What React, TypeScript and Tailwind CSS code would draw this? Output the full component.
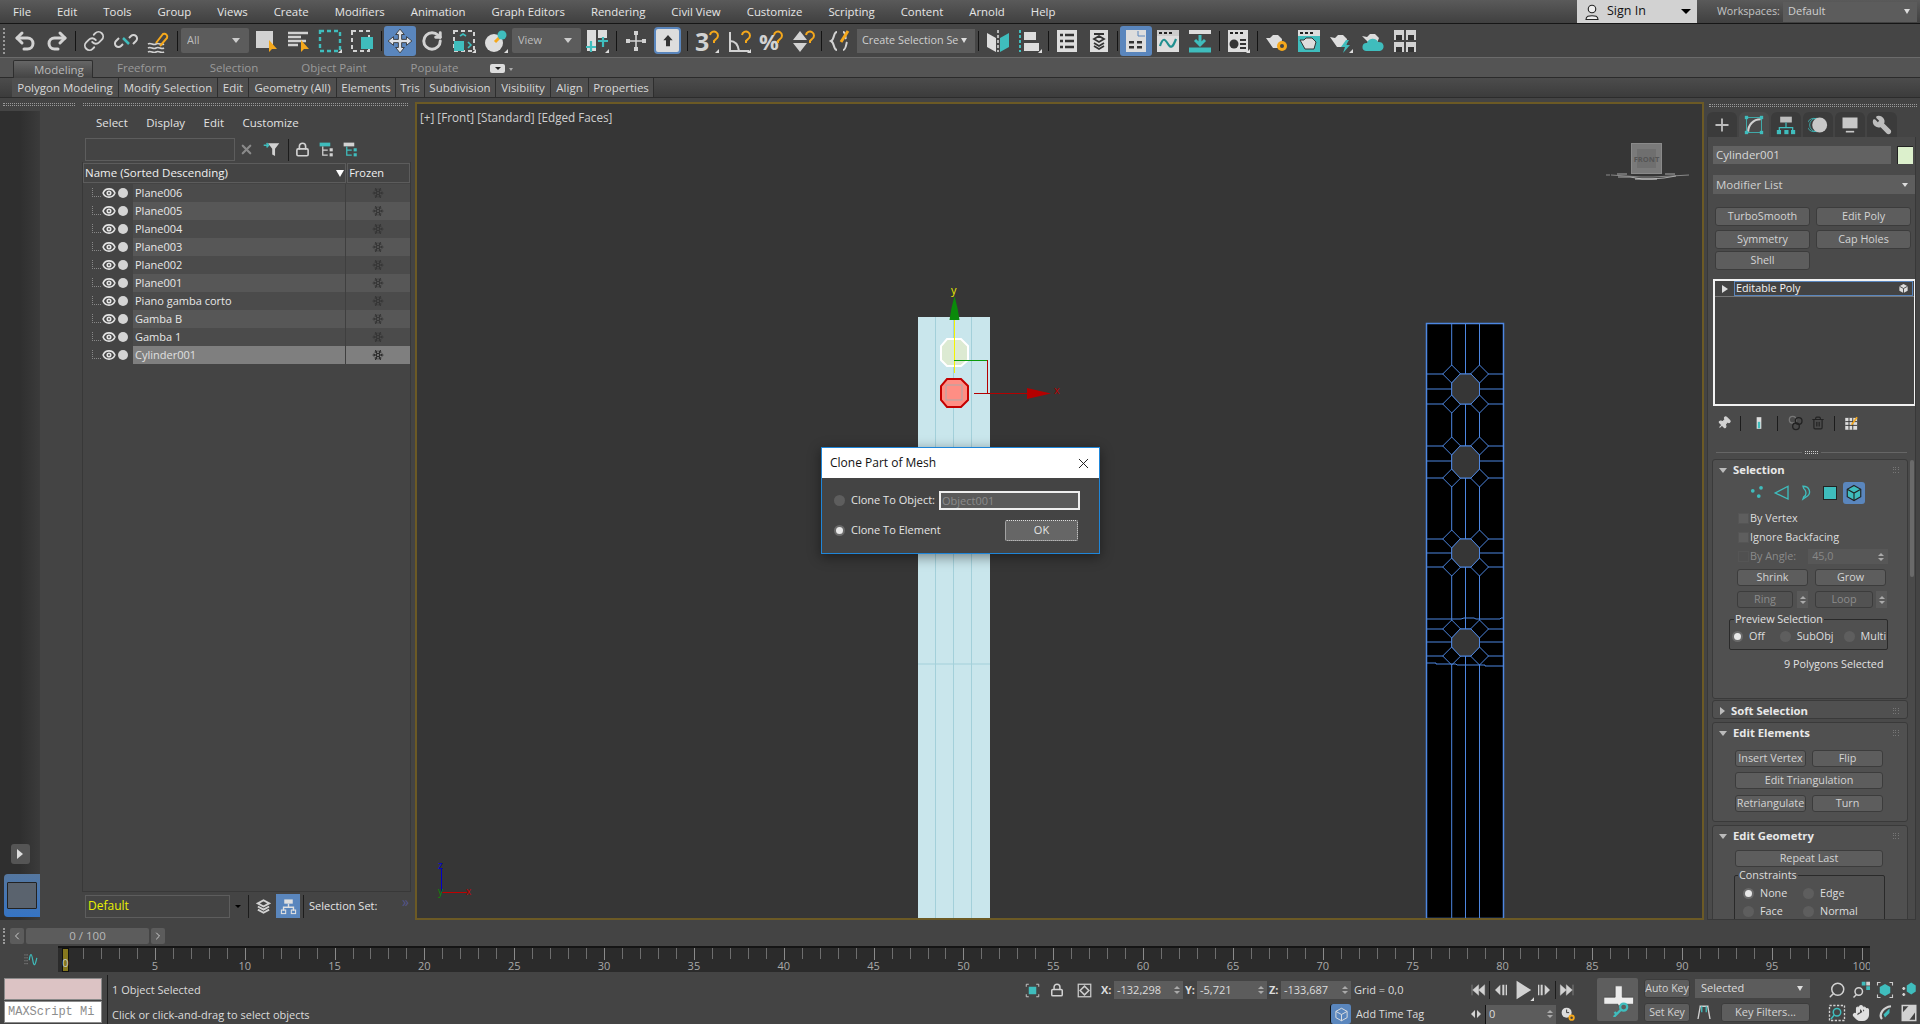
import React from 'react';
import { Undo2, Redo2, Link, RotateCw, Eye, Snowflake, Lock, X, Search, Hand, Pin, Trash2, Wrench, Plus, ChevronLeft, ChevronRight } from 'lucide-react';

const G = '#d2d2d2';
const T = '#3fbdbd';
const O = '#f5a81c';

const Ic = ({ children, s = 'w-6 h-6' }: { children: React.ReactNode; s?: string }) => (
  <svg viewBox="0 0 24 24" fill="none" className={s}>{children}</svg>
);
const Slot = ({ children, c = '' }: { children: React.ReactNode; c?: string }) => (
  <div className={`w-[32px] h-[30px] flex items-center justify-center shrink-0 ${c}`}>{children}</div>
);
const Sep = ({ w }: { w: string }) => (
  <div className={`${w} shrink-0 flex justify-center`}><div className="w-px h-[20px] bg-[#141414]" /></div>
);
const Fly = () => <path d="M24 20v4h-4z" fill="#ddd" />;
const Cursor = () => <path d="M15 11v12l3-3 2 0 3 0z" fill={O} />;
const Hook = () => <path d="M15 6a4 4 0 1 1 6 4l-2 2v2" stroke={O} strokeWidth="2" fill="none" />;
const Dropdown = ({ t, c, tc = 'text-[#bdbdbd]' }: { t: string; c: string; tc?: string }) => (
  <div className={`${c} h-[25px] bg-[#5c5c5c] rounded-[2px] flex items-center justify-between pl-[6px] pr-[9px] shrink-0 ${tc}`}>
    <span className="truncate">{t}</span>
    <span className="w-0 h-0 border-l-[4px] border-r-[4px] border-t-[5px] border-l-transparent border-r-transparent border-t-[#ccc] shrink-0" />
  </div>
);
const Grip = ({ c }: { c: string }) => <div className={`${c} h-[3px] border-y border-dotted border-[#9a9a9a]`} />;

const Menu = () => (
  <div className="h-[24px] shrink-0 flex items-center pl-[13px] gap-[26px] bg-gradient-to-b from-[#5a5a5a] to-[#404040] border-b border-[#161616] text-[#e6e6e6] text-[11.4px] relative">
    {['File', 'Edit', 'Tools', 'Group', 'Views', 'Create', 'Modifiers', 'Animation', 'Graph Editors', 'Rendering', 'Civil View', 'Customize', 'Scripting', 'Content', 'Arnold', 'Help'].map((m) => (
      <span key={m}>{m}</span>
    ))}
    <div className="ml-auto flex items-center h-full">
      <div className="w-[120px] h-[23px] bg-[#d2d2d2] flex items-center pl-[6px] pr-[4px] text-[#111] text-[12.5px]">
        <Ic s="w-[18px] h-[18px]"><circle cx="12" cy="8" r="5" stroke="#222" strokeWidth="1.5" fill="#eee" /><path d="M4 22c0-5 4-5 8-5s8 0 8 5z" stroke="#222" strokeWidth="1.5" fill="#eee" /></Ic>
        <span className="ml-[6px]">Sign In</span>
        <span className="ml-auto mr-[2px] w-0 h-0 border-l-[5px] border-r-[5px] border-t-[5px] border-l-transparent border-r-transparent border-t-black" />
      </div>
      <span className="ml-[20px] w-[61px] text-[#c4c4c4] text-[10.7px] whitespace-nowrap">Workspaces:</span>
      <div className="ml-[5px] mr-[3px] w-[134px] h-[20px] bg-[#5c5c5c] flex items-center justify-between pl-[5px] pr-[7px] text-[#cfcfcf] text-[11px]">
        <span>Default</span>
        <span className="w-0 h-0 border-l-[3px] border-r-[3px] border-t-[5px] border-l-transparent border-r-transparent border-t-[#ddd]" />
      </div>
    </div>
  </div>
);

const Toolbar = () => (
  <div className="h-[33px] shrink-0 flex items-center pl-[3px] bg-[#454545]">
    <div className="w-[6px] h-[26px] border-l-2 border-dotted border-[#999] shrink-0" />
    <Slot><Undo2 className="w-[24px] h-[24px]" color={G} strokeWidth={3} /></Slot>
    <Slot><Redo2 className="w-[24px] h-[24px]" color={G} strokeWidth={3} /></Slot>
    <Sep w="w-[5px]" />
    <Slot><Link className="w-[22px] h-[22px]" color={G} strokeWidth={2} /></Slot>
    <Slot><Ic><path d="M9 15l-2 2a3.5 3.5 0 0 1-5-5l3-3M15 9l2-2a3.5 3.5 0 0 1 5 5l-3 3" stroke={G} strokeWidth="2" /><path d="M9 9l6 6" stroke={T} strokeWidth="2.5" /></Ic></Slot>
    <Slot><Ic><path d="M2 15c3-2 5 2 8 0s5 2 8 0M2 19c3-2 5 2 8 0s5 2 8 0M2 23c3-2 5 2 8 0s5 2 8 0" stroke={G} strokeWidth="1.6" /><path d="M10 14l7-9a3 3 0 0 1 4 4l-7 8" stroke={O} strokeWidth="2" /></Ic></Slot>
    <Sep w="w-[7px]" />
    <Dropdown t="All" c="w-[68px] text-[11px]" />
    <div className="w-px" />
    <Slot><Ic><rect x="2" y="2" width="17" height="17" fill={G} /><Cursor /></Ic></Slot>
    <Slot><Ic><path d="M2 4h20M2 8h13M2 12h18M2 16h10" stroke={G} strokeWidth="2.4" /><Cursor /></Ic></Slot>
    <Slot><Ic><rect x="2" y="2" width="20" height="20" stroke={T} strokeWidth="2.4" strokeDasharray="4 3" /><Fly /></Ic></Slot>
    <Slot><Ic><rect x="2" y="2" width="17" height="20" stroke={G} strokeWidth="2" strokeDasharray="4 3" /><rect x="11" y="8" width="12" height="12" fill={T} /></Ic></Slot>
    <Sep w="w-[6px]" />
    <Slot c="bg-[#5a86bd] rounded-[3px]"><Ic s="w-[26px] h-[26px]"><path d="M12 1l4 5h-2.5v4.5H18V8l5 4-5 4v-2.500h-4.500V18H16l-4 5-4-5h2.500v-4.500H6V16l-5-4 5-4v2.500h4.500V6H8z" fill="#dfe3e8" stroke="#333" strokeWidth=".8" /></Ic></Slot>
    <Slot><RotateCw className="w-[22px] h-[22px]" color={G} strokeWidth={3.2} /></Slot>
    <Slot><Ic><rect x="2" y="2" width="20" height="20" stroke={G} strokeWidth="2" strokeDasharray="4 3" /><rect x="2" y="12" width="10" height="10" fill={T} /><path d="M8 7l3-2 3 2M16 13l3 3-3 3" stroke={T} strokeWidth="1.6" /><Fly /></Ic></Slot>
    <Slot><Ic><circle cx="10" cy="14" r="9" fill="#ddd" /><path d="M11 13l6-6" stroke={O} strokeWidth="3" /><circle cx="18" cy="6" r="4.500" fill={T} /><Fly /></Ic></Slot>
    <Dropdown t="View" c="w-[69px] text-[11px]" />
    <Slot><Ic><rect x="2" y="1" width="9" height="21" fill="#ddd" /><rect x="13" y="1" width="9" height="8" fill="#ddd" /><path d="M6 12v11M1 18h10M18 8v10M13 12h10" stroke={T} strokeWidth="2.2" /><Fly /></Ic></Slot>
    <Sep w="w-[7px]" />
    <Slot><Ic><path d="M12 3v18M3 12h18" stroke={G} strokeWidth="1.6" /><rect x="10" y="2" width="4" height="4" fill={G} /><rect x="2" y="10" width="4" height="4" fill={G} /><rect x="18" y="10" width="4" height="4" fill={G} /><rect x="10" y="18" width="4" height="4" fill={G} /></Ic></Slot>
    <Slot c="pr-px"><div className="w-[27px] h-[27px] rounded-[4px] border-2 border-[#5a86bd] bg-[#ddd] flex items-center justify-center"><Ic s="w-4 h-4"><path d="M12 3l7 8h-4v9H9v-9H5z" fill="#333" /></Ic></div></Slot>
    <Sep w="w-[7px]" />
    <Slot><span className="relative w-[24px] h-[24px] block"><span className="absolute left-0 -top-[2px] text-[25px] leading-[28px] font-bold text-[#d2d2d2]">3</span><Ic s="absolute inset-0 w-6 h-6"><Hook /><Fly /></Ic></span></Slot>
    <Slot><Ic><path d="M3 3v19h19M3 12c5 0 8 3 9 10" stroke={G} strokeWidth="2" /><Hook /><Fly /></Ic></Slot>
    <Slot><span className="relative w-[24px] h-[24px] block"><span className="absolute left-0 -top-[1px] text-[22px] leading-[26px] font-bold text-[#d2d2d2]">%</span><Ic s="absolute inset-0 w-6 h-6"><Hook /></Ic></span></Slot>
    <Slot><Ic><path d="M9 2l7 9H2zM9 23l7-9H2z" fill={G} /><Hook /></Ic></Slot>
    <Sep w="w-[5px]" />
    <Slot><Ic><path d="M9 3C5 3 7 10 3 12c4 2 2 9 6 9" stroke={G} strokeWidth="2" /><path d="M15 3c3 0 2 5 3 7M15 21c3 0 3-6 4-8" stroke={G} strokeWidth="2" /><path d="M13 13l7-11" stroke={O} strokeWidth="3" /></Ic></Slot>
    <div className="ml-px w-[118px] h-[24px] bg-[#5c5c5c] flex items-center pl-[5px] pr-[8px] text-[#d0d0d0] text-[10.8px] shrink-0 gap-[3px]">
      <span className="whitespace-nowrap">Create Selection Se</span>
      <span className="ml-auto w-0 h-0 border-l-[3px] border-r-[3px] border-t-[5px] border-l-transparent border-r-transparent border-t-[#ddd] shrink-0" />
    </div>
    <Sep w="w-[7px]" />
    <Slot><Ic><path d="M1 4l9 5v14l-9-5z" fill="#ddd" /><path d="M12 1v22" stroke="#ddd" strokeWidth="1.500" strokeDasharray="3 2" /><path d="M23 4l-9 5v14l9-5z" fill={T} /></Ic></Slot>
    <Slot><Ic><path d="M2 1v22" stroke={T} strokeWidth="2" strokeDasharray="3 2" /><rect x="6" y="3" width="12" height="8" fill="#ddd" /><rect x="6" y="14" width="15" height="8" fill="#ddd" /><Fly /></Ic></Slot>
    <Sep w="w-[5px]" />
    <Slot><Ic><rect x="2" y="1" width="20" height="22" fill="#ddd" /><path d="M5 6h3M10 6h9M5 12h3M10 12h9M5 18h3M10 18h9" stroke="#333" strokeWidth="2.500" /></Ic></Slot>
    <Slot><Ic><rect x="3" y="1" width="18" height="22" fill="#ddd" /><path d="M7 5h10M7 10l5-3 5 3-5 3zM7 14l5 3 5-3M7 17l5 3 5-3" stroke="#333" strokeWidth="1.800" /></Ic></Slot>
    <Sep w="w-[5px]" />
    <Slot c="bg-[#5a86bd] rounded-[3px]"><Ic><rect x="2" y="1" width="20" height="22" fill="#ddd" /><path d="M14 2v5h7" stroke="#5a86bd" strokeWidth="1" /><rect x="5" y="12" width="5" height="2.500" fill="#333" /><rect x="13" y="12" width="5" height="2.500" fill="#333" /><rect x="5" y="17" width="5" height="2.500" fill="#333" /><rect x="13" y="17" width="5" height="2.500" fill="#333" /></Ic></Slot>
    <Slot><Ic><rect x="1" y="1" width="22" height="22" fill="#ddd" /><rect x="1" y="1" width="22" height="6" fill="#ccc" /><path d="M3 4h3M8 4h3M13 4h3" stroke="#222" strokeWidth="2" /><path d="M4 17c3-9 5-7 8-2s5 3 8-5" stroke="#1f8f8f" strokeWidth="2.200" /></Ic></Slot>
    <Slot><Ic><path d="M1 3h22" stroke="#ddd" strokeWidth="4" /><path d="M12 6v9M7 11l5 5 5-5" stroke={T} strokeWidth="3" /><path d="M1 21h22" stroke={T} strokeWidth="5" /></Ic></Slot>
    <Sep w="w-[6px]" />
    <Slot><Ic><rect x="2" y="1" width="20" height="22" fill="#ddd" /><path d="M4 4h3M9 4h3M14 4h3" stroke="#222" strokeWidth="2" /><circle cx="8" cy="15" r="4.500" fill="#333" /><path d="M14 11h6M14 15h6M14 19h6" stroke="#333" strokeWidth="2" /><Fly /></Ic></Slot>
    <Sep w="w-[7px]" />
    <Slot><Ic><path d="M1 9l4 0 3-3h5l4 4-1 9H8z" fill="#ddd" /><circle cx="17" cy="17" r="5" fill={O} /><circle cx="17" cy="17" r="2" fill="#444" /></Ic></Slot>
    <Slot><Ic><rect x="1" y="1" width="22" height="22" fill={T} /><rect x="1" y="1" width="22" height="6" fill="#ddd" /><path d="M3 4h3M8 4h3M13 4h3" stroke="#222" strokeWidth="2" /><path d="M3 11h4l2-2h6l4 4-2 7H8z" fill="#ddd" stroke="#333" /></Ic></Slot>
    <Slot><Ic><path d="M1 8l5 1 3-3h5l4 4-1 8H8z" fill="#ddd" /><path d="M17 11l-5 7h4l-2 6 7-8h-4l3-5z" fill={T} /><Fly /></Ic></Slot>
    <Slot><Ic><path d="M1 7l5 1 3-3h5l4 4-2 5H8z" fill="#ddd" /><path d="M5 22a4 4 0 0 1 1-8 6 6 0 0 1 11-1 4.500 4.500 0 0 1 2 9z" fill={T} /></Ic></Slot>
    <Slot><div className="grid grid-cols-2 gap-[2px]">{[0, 1, 2, 3].map((i) => <div key={i} className="w-[10px] h-[10px] bg-[#d2d2d2] flex items-end justify-center"><div className="w-[6px] h-[5px] bg-[#333]" /></div>)}</div></Slot>
  </div>
);

const Tabs = () => (
  <div className="h-[21px] shrink-0 bg-[#545454] border-t border-[#6b6b6b] border-b-[#2b2b2b] border-b flex items-end pl-[13px] text-[#9a9a9a] relative">
    <div className="w-[80px] h-[18px] -mb-px bg-gradient-to-b from-[#666] to-[#444] border border-[#2e2e2e] border-b-0 rounded-t-[2px] pl-[20px] leading-[17px] text-[#b9b9b9]">Modeling</div>
    <span className="ml-[24px] mb-px">Freeform</span>
    <span className="ml-[43px] mb-px">Selection</span>
    <span className="ml-[43px] mb-px">Object Paint</span>
    <span className="ml-[44px] mb-px">Populate</span>
    <div className="ml-[32px] mb-[4px] w-[15px] h-[9px] bg-[#ddd] rounded-[2px] flex items-center justify-center"><span className="w-0 h-0 border-l-[3px] border-r-[3px] border-t-[3px] border-l-transparent border-r-transparent border-t-[#222]" /></div>
    <span className="ml-[4px] mb-[6px] w-0 h-0 border-l-[2px] border-r-[2px] border-t-[3px] border-l-transparent border-r-transparent border-t-[#aaa]" />
  </div>
);

const ribbon = [
  { t: 'Polygon Modeling', c: 'w-[107px]' }, { t: 'Modify Selection', c: 'w-[99px]' }, { t: 'Edit', c: 'w-[31px]' },
  { t: 'Geometry (All)', c: 'w-[88px]' }, { t: 'Elements', c: 'w-[59px]' }, { t: 'Tris', c: 'w-[29px]' },
  { t: 'Subdivision', c: 'w-[71px]' }, { t: 'Visibility', c: 'w-[55px]' }, { t: 'Align', c: 'w-[38px]' }, { t: 'Properties', c: 'w-[65px]' },
];
const Ribbon = () => (
  <div className="h-[20px] shrink-0 bg-gradient-to-b from-[#4c4c4c] to-[#3c3c3c] border-b border-[#2c2c2c] flex pl-[12px] text-[#d8d8d8]">
    {ribbon.map((r) => (
      <div key={r.t} className={`${r.c} h-[19px] bg-[#4f4f4f] border-r border-[#2e2e2e] flex items-center justify-center shrink-0 whitespace-nowrap`}>{r.t}</div>
    ))}
  </div>
);

const objs = ['Plane006', 'Plane005', 'Plane004', 'Plane003', 'Plane002', 'Plane001', 'Piano gamba corto', 'Gamba B', 'Gamba 1', 'Cylinder001'];

const LeftDock = () => (
  <div className="w-[82px] shrink-0 flex flex-col">
    <div className="h-[13px] flex items-center pl-[3px] shrink-0"><Grip c="w-[72px]" /></div>
    <div className="w-[40px] flex-1 bg-gradient-to-r from-[#2f2f2f] via-[#2f2f2f] to-[#3b3b3b] flex flex-col items-center justify-end pb-[3px]">
      <div className="w-[19px] h-[20px] bg-[#555] rounded-[3px] flex items-center justify-center mb-[10px]"><span className="w-0 h-0 border-t-[5px] border-b-[5px] border-l-[6px] border-t-transparent border-b-transparent border-l-[#ddd]" /></div>
      <div className="w-[36px] h-[43px] ml-[4px] bg-gradient-to-b from-[#55779f] to-[#3574c4] rounded-l-[4px] flex items-start pl-[3px] pt-[8px]">
        <div className="w-[30px] h-[27px] bg-[#5a636e] border border-[#222] rounded-[1px]" />
      </div>
    </div>
  </div>
);

const Explorer = () => (
  <div className="w-[330px] shrink-0 flex flex-col">
    <div className="h-[13px] flex items-center pl-px shrink-0"><Grip c="w-[325px]" /></div>
    <div className="h-[26px] shrink-0 flex items-center gap-[18.5px] pl-[14px] pb-[2px] text-[11.5px] text-[#e2e2e2]">
      <span>Select</span><span>Display</span><span>Edit</span><span>Customize</span>
    </div>
    <div className="h-[25px] shrink-0 flex items-center pl-[3px]">
      <div className="w-[150px] h-[23px] border border-[#5d5d5d] bg-[#444]" />
      <X className="ml-[4px] w-[15px] h-[15px]" color="#8a8a8a" strokeWidth={3.5} />
      <Ic s="ml-[9px] w-[17px] h-[17px]"><path d="M7 3h16l-6 8v10l-4-2v-8z" fill={G} /><path d="M1 6h7M5 3l3 3-3 3" stroke={T} strokeWidth="2" /></Ic>
      <div className="ml-[8px] w-px h-[22px] bg-[#1c1c1c]" />
      <Lock className="ml-[6px] w-[15px] h-[15px]" color={G} strokeWidth={2.6} />
      <Ic s="ml-[9px] w-[15px] h-[15px]"><rect x="1" y="1" width="17" height="6" fill={T} /><path d="M6 7v14h8M6 13h8" stroke={G} strokeWidth="2" /><rect x="17" y="10" width="5" height="5" fill={G} /><rect x="17" y="18" width="5" height="5" fill={G} /></Ic>
      <Ic s="ml-[9px] w-[15px] h-[15px]"><rect x="1" y="1" width="17" height="6" fill={G} /><path d="M6 7v14h8M6 13h8" stroke={T} strokeWidth="2" /><rect x="17" y="10" width="5" height="5" fill={T} /><rect x="17" y="18" width="5" height="5" fill={T} /></Ic>
    </div>
    <div className="flex-1 mr-[1px] border border-[#383838] border-t-0 flex flex-col text-[#e8e8e8]">
      <div className="h-[22px] shrink-0 flex pt-px text-[#f0f0f0]">
        <div className="w-[264px] h-[20px] border border-[#5c5c5c] flex items-center justify-between pl-[1px] pr-[1px]">
          <span>Name (Sorted Descending)</span>
          <span className="w-0 h-0 border-l-[4px] border-r-[4px] border-t-[7px] border-l-transparent border-r-transparent border-t-white" />
        </div>
        <div className="ml-px w-[63px] h-[20px] border border-[#5c5c5c] flex items-center pl-px text-[11px]">Frozen</div>
      </div>
      {objs.map((o, i) => {
        const sel = i === 9;
        const bg = sel ? 'bg-[#7f7f7f]' : i % 2 ? 'bg-[#575757]' : 'bg-[#4b4b4b]';
        return (
          <div key={o} className="h-[18px] shrink-0 flex items-center">
            <div className="w-[50px] h-full flex items-center shrink-0">
              <div className="ml-[9px] w-[9px] h-[9px] border-b border-l border-dotted border-[#888] -mt-[2px]" />
              <Eye className="ml-[1px] w-[14px] h-[14px]" color="#e4e4e4" strokeWidth={2.8} />
              <div className="ml-[2px] w-[10px] h-[10px] rounded-full bg-[#d4d4d4]" />
            </div>
            <div className={`w-[213px] h-full ${bg} flex items-center pl-[2px] border-r border-[#3f3f3f] text-[11px] ${sel ? 'text-[#e0e0e0]' : ''}`}>{o}</div>
            <div className={`w-[64px] h-full ${bg} flex items-center justify-center`}><Snowflake className="w-[12px] h-[12px]" color={sel ? '#2a2a2a' : '#363636'} strokeWidth={2.2} /></div>
          </div>
        );
      })}
    </div>
    <div className="h-[28px] shrink-0 flex items-center pl-[3px] text-[#e6e6e6]">
      <div className="w-[145px] h-[23px] border border-[#5d5d5d] pl-[2px] text-[#e9f000] text-[12px] leading-[20px]">Default</div>
      <span className="ml-[5px] w-0 h-0 border-l-[3px] border-r-[3px] border-t-[3px] border-l-transparent border-r-transparent border-t-black" />
      <div className="ml-[7px] w-px h-[23px] bg-[#1c1c1c]" />
      <Ic s="ml-[7px] w-[15px] h-[15px]"><path d="M3 7l9-5 9 5-9 5zM3 12l9 5 9-5M3 17l9 5 9-5" stroke={G} strokeWidth="3" /></Ic>
      <div className="ml-[5px] w-[24px] h-[24px] bg-[#5a86bd] flex items-center justify-center">
        <Ic s="w-[17px] h-[17px]"><rect x="6" y="2" width="12" height="6" fill="#e0e0e0" /><path d="M12 8v5M5 18v-5h14v5" stroke="#e0e0e0" strokeWidth="2" /><rect x="2" y="17" width="6" height="5" stroke="#e0e0e0" strokeWidth="1.500" /><rect x="16" y="17" width="6" height="5" stroke="#e0e0e0" strokeWidth="1.500" /></Ic>
      </div>
      <div className="ml-[3px] w-px h-[23px] bg-[#1c1c1c]" />
      <span className="ml-[5px] text-[11px] whitespace-nowrap">Selection Set:</span>
      <span className="ml-auto mr-[3px] -mt-[8px] text-[#54558a] text-[14px] leading-none">»</span>
    </div>
  </div>
);

const Scene = () => {
  const verts = [1451.7, 1465.5, 1479.5];
  const octs = [
    { t: 374, m: 389, b: 404 }, { t: 446, m: 461, b: 478 }, { t: 539, m: 553, b: 567 }, { t: 629, m: 642, b: 656 },
  ];
  const blue = '#4d86e0';
  return (
    <svg viewBox="417 104 1285 814" className="absolute inset-0 w-full h-full">
      <rect x="918" y="317" width="72" height="601" fill="#c9e6ec" />
      <path d="M935.500 317V918M953.500 317V918M971.500 317V918M918 664H990" stroke="#a3d0da" strokeWidth="1" />
      <polygon points="947,339 961,339 968,346 968,360 961,366 947,366 941,360 941,346" fill="#dcead2" stroke="#fff" strokeWidth="2" />
      <polygon points="947,379 961,379 968,386 968,400 961,407 947,407 941,400 941,386" fill="#ff8e84" stroke="#c40000" strokeWidth="2" />
      <rect x="946" y="385" width="16" height="15" fill="none" stroke="#a9a9a9" />
      <path d="M954.500 320V373" stroke="#f4f400" strokeWidth="1" />
      <path d="M954 360.500H987.500" stroke="#0a9a0a" strokeWidth="1" />
      <path d="M987.500 360V393.500M974 393.500H1030" stroke="#b40000" strokeWidth="1" />
      <path d="M954.500 296l3 12 2 12h-10l2-12z" fill="#0a8a0a" />
      <path d="M1027 388l24 5.500-24 5.500z" fill="#b40000" />
      <text x="951" y="294" fill="#e8e800" fontSize="11">y</text>
      <text x="1054" y="394" fill="#b40000" fontSize="11">x</text>
      <rect x="1426.500" y="323.500" width="77" height="595" fill="#000" stroke={blue} strokeWidth="1.500" />
      {verts.map((v) => <path key={v} d={`M${v} 323V918`} stroke={blue} strokeWidth="1" />)}
      {octs.map((o) => (
        <g key={o.t}>
          <path d={`M1426 ${o.t}H1504M1426 ${o.m}H1504M1426 ${o.b}H1504`} stroke={blue} strokeWidth="1" />
          {[[1451.7, o.t], [1479.5, o.t], [1451.7, o.b], [1479.5, o.b]].map(([x, y]) => (
            <polygon key={`${x}-${y}`} points={`${x - 9},${y} ${x},${y - 9} ${x + 9},${y} ${x},${y + 9}`} fill="#000" stroke={blue} strokeWidth="1" />
          ))}
          <polygon points={`1460,${o.t} 1471,${o.t} 1479.500,${o.t + 9} 1479.500,${o.b - 9} 1471,${o.b} 1460,${o.b} 1451.700,${o.b - 9} 1451.700,${o.t + 9}`} fill="#363636" stroke={blue} strokeWidth="1" />
        </g>
      ))}
      <path d="M1426 619H1461l3-1h10l2 1h24l1-1h3M1426 663H1436v1h20l1 1h28v1h18" fill="none" stroke={blue} strokeWidth="1" />
      <rect x="1631.500" y="143.500" width="30" height="30" fill="#7a7a7a" stroke="#8a8a8a" />
      <rect x="1637" y="149" width="19" height="19" fill="#6f6f6f" />
      <text x="1646.500" y="162" fill="#555" fontSize="7.500" fontWeight="700" textAnchor="middle">FRONT</text>
      <path d="M1606 175h4M1611 175l30 2h12l36-2" stroke="#888" fill="none" />
      <path d="M1618 177l12 0 12 2h10l12 -1 12-2M1617 174h10M1665 174h10" stroke="#aaa" fill="none" />
      <path d="M1635 179h22" stroke="#ccc" />
      <path d="M441.500 868V892.500H467" fill="none" stroke="#0000c8" />
      <path d="M441.500 892.500H467" stroke="#c00000" />
      <text x="438" y="869" fill="#0000d0" fontSize="10">z</text>
      <text x="438" y="895" fill="#0a8a0a" fontSize="10">y</text>
      <text x="466" y="895" fill="#c00000" fontSize="10">x</text>
    </svg>
  );
};

const Radio = ({ on, c = '' }: { on?: boolean; c?: string }) => (
  <span className={`w-[11px] h-[11px] rounded-full flex items-center justify-center shrink-0 ${on ? 'bg-[#6a6a6a]' : 'bg-[#5e5e5e]'} ${c}`}>
    {on && <span className="w-[7px] h-[7px] rounded-full bg-[#e8e8e8]" />}
  </span>
);

const Dialog = () => (
  <div className="absolute left-[404px] top-[343px] w-[279px] h-[107px] border border-[#1f86d9] bg-[#444] shadow-[0_3px_12px_rgba(0,0,0,0.45)] flex flex-col z-10">
    <div className="h-[30px] bg-white flex items-center justify-between pl-[8px] pr-[7px] text-[#111] text-[12px] shrink-0">
      <span>Clone Part of Mesh</span>
      <X className="w-[17px] h-[17px]" color="#111" strokeWidth={1.3} />
    </div>
    <div className="flex-1 pl-[12px] pr-[20px] pt-[13px] text-[#e4e4e4] text-[11px]">
      <div className="flex items-center h-[19px]">
        <Radio />
        <span className="ml-[6px] w-[82px] whitespace-nowrap">Clone To Object:</span>
        <div className="ml-[6px] w-[141px] h-[19px] border-2 border-[#eee] bg-[#5a5a5a] text-[#8b8b8b] pl-px leading-[15px] shrink-0">Object001</div>
      </div>
      <div className="flex items-center h-[21px] mt-[10px]">
        <Radio on />
        <span className="ml-[6px] whitespace-nowrap">Clone To Element</span>
        <div className="ml-auto mr-px w-[73px] h-[21px] bg-[#666] border border-dotted border-[#ddd] rounded-[2px] flex items-center justify-center">OK</div>
      </div>
    </div>
  </div>
);

const Viewport = () => (
  <div className="w-[1289px] h-[818px] mt-[4px] shrink-0 border-2 border-[#6c5a25] bg-[#363636] relative overflow-hidden ml-[3px]">
    <Scene />
    <div className="absolute left-[3px] top-[5px] text-[#cfcfcf] text-[11.7px] whitespace-nowrap">[+] [Front] [Standard] [Edged Faces]</div>
    <Dialog />
  </div>
);

const PBtn = ({ t, c, dim }: { t: string; c: string; dim?: boolean }) => (
  <div className={`${c} bg-[#5d5d5d] border border-[#3c3c3c] rounded-[3px] flex items-center justify-center shrink-0 whitespace-nowrap ${dim ? 'text-[#8c8c8c] bg-[#525252]' : 'text-[#d4d4d4]'}`}>{t}</div>
);
const Head = ({ t, open = true }: { t: string; open?: boolean }) => (
  <div className="h-[20px] flex items-center pl-[6px] pr-[8px] shrink-0">
    {open ? <span className="w-0 h-0 border-l-[4px] border-r-[4px] border-t-[5px] border-l-transparent border-r-transparent border-t-[#bbb]" /> : <span className="ml-[1px] w-0 h-0 border-t-[4px] border-b-[4px] border-l-[5px] border-t-transparent border-b-transparent border-l-[#bbb]" />}
    <span className={`${open ? 'ml-[6px]' : 'ml-[6px]'} font-bold text-[11.3px] text-[#e8e8e8]`}>{t}</span>
    <span className="ml-auto w-[6px] h-[6px] grid grid-cols-3 gap-px">{[0, 1, 2, 3, 4, 5, 6, 7, 8].map((i) => <i key={i} className="bg-[#777] w-px h-px" />)}</span>
  </div>
);
const Check = ({ t, dim }: { t: string; dim?: boolean }) => (
  <div className={`flex items-center h-[19px] pl-[25px] ${dim ? 'text-[#8a8a8a]' : 'text-[#dedede]'}`}>
    <span className={`w-[11px] h-[11px] ${dim ? 'bg-[#505050]' : 'bg-[#5e5e5e]'} border border-[#555] shrink-0`} />
    <span className="ml-[1px]">{t}</span>
  </div>
);
const Spin = () => (
  <span className="flex flex-col gap-[2px] shrink-0">
    <span className="w-0 h-0 border-l-[3px] border-r-[3px] border-b-[3px] border-l-transparent border-r-transparent border-b-[#aaa]" />
    <span className="w-0 h-0 border-l-[3px] border-r-[3px] border-t-[3px] border-l-transparent border-r-transparent border-t-[#aaa]" />
  </span>
);

const RightPanel = () => (
  <div className="flex-1 min-w-0 flex flex-col pl-[3px] pr-[3px] text-[10.8px]">
    <div className="h-[14px] flex items-center pl-[2px] shrink-0"><Grip c="w-[208px]" /></div>
    <div className="h-[25px] flex gap-[2px] shrink-0">
      {[
        <Plus key="a" className="w-[20px] h-[20px]" color="#bdbdbd" strokeWidth={2.2} />,
        <Ic key="b" s="w-[20px] h-[20px]"><rect x="3" y="3" width="18" height="18" stroke={T} /><path d="M5 20c0-8 6-15 15-15" stroke={G} strokeWidth="2.500" /><rect x="1" y="1" width="4" height="4" fill={T} /><rect x="19" y="1" width="4" height="4" fill={T} /><rect x="1" y="19" width="4" height="4" fill={T} /><rect x="19" y="19" width="4" height="4" fill={T} /></Ic>,
        <Ic key="c" s="w-[20px] h-[20px]"><rect x="5" y="2" width="14" height="7" fill="#bdbdbd" /><path d="M12 9v6M4 19v-4h16v4" stroke={T} strokeWidth="1.500" /><rect x="1" y="18" width="5" height="5" fill={T} /><rect x="10" y="18" width="5" height="5" fill={T} /><rect x="18" y="18" width="5" height="5" fill={T} /></Ic>,
        <Ic key="d" s="w-[20px] h-[20px]"><circle cx="7" cy="12" r="8" stroke={T} /><circle cx="10" cy="12" r="8" stroke={T} /><circle cx="14" cy="12" r="9" fill="#c8c8c8" /></Ic>,
        <Ic key="e" s="w-[20px] h-[20px]"><rect x="3" y="3" width="18" height="13" fill="#c8c8c8" /><path d="M7 20h10" stroke="#c8c8c8" strokeWidth="2" /></Ic>,
        <Wrench key="f" className="w-[20px] h-[20px] -scale-x-100" color="#bdbdbd" fill="#bdbdbd" />,
      ].map((ic, i) => (
        <div key={i} className={`w-[30px] h-full rounded-t-[6px] flex items-center justify-center ${i === 1 ? 'bg-[#4b4b4b]' : 'bg-[#3b3b3b]'}`}>{ic}</div>
      ))}
    </div>
    <div className="flex-1 min-h-0 bg-[#4a4a4a] border border-[#383838] border-t-0 mr-px flex flex-col overflow-hidden">
      <div className="flex pl-[5px] pt-[9px] shrink-0">
        <div className="w-[178px] h-[18px] bg-[#626262] pl-[3px] text-[#d8d8d8] leading-[18px] text-[11.5px]">Cylinder001</div>
        <div className="ml-[6px] w-[16px] h-[18px] bg-[#dcf0cc] border-l border-t border-[#222]" />
      </div>
      <div className="ml-[5px] mt-[11px] w-[202px] h-[19px] bg-[#5e5e5e] flex items-center justify-between pl-[3px] pr-[7px] text-[#d0d0d0] shrink-0 text-[11.5px]">
        <span>Modifier List</span>
        <span className="w-0 h-0 border-l-[3px] border-r-[3px] border-t-[4px] border-l-transparent border-r-transparent border-t-[#ddd]" />
      </div>
      <div className="ml-[7px] mt-[13px] grid grid-cols-[95px_95px] gap-x-[6px] gap-y-[4px] shrink-0">
        <PBtn t="TurboSmooth" c="h-[19px]" /><PBtn t="Edit Poly" c="h-[19px]" />
        <PBtn t="Symmetry" c="h-[19px]" /><PBtn t="Cap Holes" c="h-[19px]" />
        <PBtn t="Shell" c="h-[19px] -mt-[2px]" />
      </div>
      <div className="ml-[5px] mt-[9px] w-[203px] h-[127px] border-2 border-[#f2f2f2] bg-[#434343] shrink-0">
        <div className="h-[16px] flex border-b border-[#777]">
          <div className="w-[19px] flex items-center pl-[7px]"><span className="w-0 h-0 border-t-[4px] border-b-[4px] border-l-[6px] border-t-transparent border-b-transparent border-l-[#ddd]" /></div>
          <div className="flex-1 border border-[#5a86bd] flex items-center justify-between pl-px pr-[3px] text-[#f4f4f4] mr-px">
            <span>Editable Poly</span>
            <Ic s="w-[11px] h-[11px]"><path d="M12 2l9 5v10l-9 5-9-5V7z" fill="#ddd" /><path d="M3 7l9 5 9-5M12 12v10" stroke="#444" strokeWidth="2" /></Ic>
          </div>
        </div>
      </div>
      <div className="h-[32px] mt-[1px] ml-[9px] flex items-center shrink-0">
        <Pin className="w-[14px] h-[14px] rotate-45" color={G} fill={G} />
        <div className="ml-[9px] w-px h-[15px] bg-[#1c1c1c]" />
        <Ic s="ml-[11px] w-[14px] h-[14px]"><rect x="8" y="2" width="8" height="20" fill="#ddd" /><rect x="10" y="10" width="4" height="11" fill={T} /></Ic>
        <div className="ml-[11px] w-px h-[15px] bg-[#1c1c1c]" />
        <Ic s="ml-[10px] w-[16px] h-[16px]"><circle cx="7" cy="7" r="5" stroke="#777" strokeWidth="2" /><circle cx="16" cy="9" r="5" stroke="#222" strokeWidth="2" /><circle cx="12" cy="17" r="5" stroke="#222" strokeWidth="2" /></Ic>
        <Trash2 className="ml-[7px] w-[14px] h-[14px]" color="#222" strokeWidth={2} />
        <div className="ml-[9px] w-px h-[15px] bg-[#1c1c1c]" />
        <Ic s="ml-[9px] w-[15px] h-[15px]"><rect x="2" y="3" width="19" height="19" fill="#ddd" /><path d="M2 9h19M2 15h19M8 3v19M14 3v19" stroke="#333" strokeWidth="1.500" /><path d="M12 14l9-12" stroke={O} strokeWidth="2.500" /></Ic>
      </div>
      <div className="h-[13px] mt-[7px] flex items-center justify-center gap-[3px] shrink-0">
        <div className="w-[86px] h-px bg-[#666]" /><div className="w-[13px] h-[3px] border-y border-dotted border-[#ccc]" /><div className="w-[86px] h-px bg-[#666]" />
      </div>
      <div className="flex-1 min-h-0 pl-[4px] flex flex-col overflow-hidden relative">
        <div className="absolute right-[1px] top-[1px] w-[4px] h-[117px] bg-[#6a6a6a] rounded-[2px]" />
        <div className="w-[196px] h-[240px] shrink-0 bg-[#505050] border border-[#3a3a3a] rounded-[3px]">
          <Head t="Selection" />
          <div className="h-[24px] mt-px flex items-center pl-[36px] gap-[6px]">
            <Ic s="w-[18px] h-[18px]"><circle cx="5" cy="9" r="2.500" fill={T} /><circle cx="16" cy="5" r="2.500" fill={T} /><circle cx="13" cy="16" r="2.500" fill={T} /></Ic>
            <Ic s="w-[18px] h-[18px]"><path d="M20 3v17L3 12z" stroke={T} strokeWidth="1.800" /></Ic>
            <Ic s="w-[18px] h-[18px]"><path d="M8 3c9 0 11 9 6 13l-6 4 1-3c4-2 4-8 0-11z" stroke={T} strokeWidth="1.800" /></Ic>
            <div className="w-[14px] h-[14px] bg-[#3fbdbd] border border-[#222] ml-[2px]" />
            <div className="w-[22px] h-[22px] rounded-[3px] bg-[#5a86bd] flex items-center justify-center"><Ic s="w-[18px] h-[18px]"><path d="M12 2l9 5v10l-9 5-9-5V7z" fill={T} stroke="#222" strokeWidth="1.500" /><path d="M3 7l9 5 9-5M12 12v10" stroke="#222" strokeWidth="1.500" /></Ic></div>
          </div>
          <div className="mt-[4px]"><Check t="By Vertex" /><Check t="Ignore Backfacing" /></div>
          <div className="flex items-center h-[19px]">
            <Check t="By Angle:" dim />
            <div className="ml-[12px] w-[80px] h-[15px] bg-[#575757] text-[#888] pl-[4px] pr-[4px] flex items-center justify-between">45,0<Spin /></div>
          </div>
          <div className="flex pl-[24px] mt-[3px] gap-[7px]">
            <PBtn t="Shrink" c="w-[71px] h-[17px]" /><PBtn t="Grow" c="w-[71px] h-[17px]" />
          </div>
          <div className="flex pl-[24px] mt-[5px] items-center">
            <PBtn t="Ring" c="w-[56px] h-[17px]" dim />
            <div className="ml-[4px] w-[11px] h-[17px] bg-[#5a5a5a] flex items-center justify-center"><Spin /></div>
            <PBtn t="Loop" c="ml-[7px] w-[58px] h-[17px]" dim />
            <div className="ml-[3px] w-[11px] h-[17px] bg-[#5a5a5a] flex items-center justify-center"><Spin /></div>
          </div>
          <div className="relative ml-[16px] mt-[11px] w-[159px] h-[31px] border border-[#2a2a2a] rounded-[2px] flex items-center pl-[2px] text-[#dedede]">
            <span className="absolute left-[4px] -top-[8px] bg-[#505050] px-px leading-[14px] text-[#e2e2e2]">Preview Selection</span>
            <Radio on c="mt-[4px]" /><span className="ml-[6px] mt-[4px]">Off</span>
            <Radio c="ml-[15px] mt-[4px]" /><span className="ml-[6px] mt-[4px]">SubObj</span>
            <Radio c="ml-[10px] mt-[4px]" /><span className="ml-[6px] mt-[4px]">Multi</span>
          </div>
          <div className="mt-[6px] pl-[71px] text-[#e2e2e2] h-[16px] whitespace-nowrap">9 Polygons Selected</div>
        </div>
        <div className="w-[196px] h-[19px] mt-[1px] shrink-0 bg-[#505050] border border-[#3a3a3a] rounded-[3px] overflow-hidden"><Head t="Soft Selection" open={false} /></div>
        <div className="w-[196px] h-[100px] mt-[3px] shrink-0 bg-[#505050] border border-[#3a3a3a] rounded-[3px]">
          <Head t="Edit Elements" />
          <div className="flex pl-[22px] mt-[7px] gap-[6px]">
            <PBtn t="Insert Vertex" c="w-[71px] h-[17px]" /><PBtn t="Flip" c="w-[71px] h-[17px]" />
          </div>
          <div className="pl-[22px] mt-[5px]"><PBtn t="Edit Triangulation" c="w-[148px] h-[17px]" /></div>
          <div className="flex pl-[22px] mt-[6px] gap-[6px]">
            <PBtn t="Retriangulate" c="w-[71px] h-[17px]" /><PBtn t="Turn" c="w-[71px] h-[17px]" />
          </div>
        </div>
        <div className="w-[196px] h-[110px] mt-[3px] shrink-0 bg-[#505050] border border-[#3a3a3a] rounded-[3px]">
          <Head t="Edit Geometry" />
          <div className="pl-[22px] mt-[4px]"><PBtn t="Repeat Last" c="w-[148px] h-[17px] text-[#bdbdbd]" /></div>
          <div className="relative ml-[21px] mt-[8px] w-[151px] h-[60px] border border-[#2a2a2a] rounded-[2px] grid grid-cols-[60px_70px] content-start pl-[8px] pt-[9px] gap-y-[2px] text-[#dedede]">
            <span className="absolute left-[3px] -top-[8px] bg-[#505050] px-px leading-[14px]">Constraints</span>
            <div className="flex items-center h-[16px]"><Radio on /><span className="ml-[6px]">None</span></div>
            <div className="flex items-center h-[16px]"><Radio /><span className="ml-[6px]">Edge</span></div>
            <div className="flex items-center h-[16px]"><Radio /><span className="ml-[6px]">Face</span></div>
            <div className="flex items-center h-[16px]"><Radio /><span className="ml-[6px]">Normal</span></div>
          </div>
        </div>
      </div>
    </div>
  </div>
);

const Timeline = () => (
  <>
    <div className="h-[26px] shrink-0 flex items-center pl-[3px] pt-[5px] text-[#b9b9b9]">
      <div className="w-[3px] h-[16px] border-l-2 border-dotted border-[#999]" />
      <div className="ml-[4px] w-[14px] h-[16px] bg-[#5c5c5c] rounded-[2px] flex items-center justify-center"><ChevronLeft className="w-[12px] h-[12px]" color="#ccc" /></div>
      <div className="ml-[2px] w-[123px] h-[16px] bg-[#5c5c5c] rounded-[2px] flex items-center justify-center">0 / 100</div>
      <div className="ml-[2px] w-[14px] h-[16px] bg-[#5c5c5c] rounded-[2px] flex items-center justify-center"><ChevronRight className="w-[12px] h-[12px]" color="#ccc" /></div>
    </div>
    <div className="h-[27px] shrink-0 flex">
      <div className="w-[58px] h-[25px] flex items-center pl-[24px]">
        <Ic s="w-[14px] h-[14px]"><path d="M1 5h6M1 10h6M1 15h6M1 20h6" stroke={G} strokeWidth="1.200" strokeDasharray="1 1" /><path d="M9 14c2-14 4-12 6 0s4 10 7-4" stroke={T} strokeWidth="2" /></Ic>
      </div>
      <div className="w-[1812px] h-[26px] bg-[#2b2b2b] border-t-2 border-[#151515] relative flex pl-[7px] overflow-hidden">
        {Array.from({ length: 101 }, (_, i) => (
          <div key={i} className="w-[17.97px] shrink-0 relative h-full">
            <div className={`w-px ${i % 5 === 0 ? 'h-[12px] bg-[#8a8a8a]' : 'h-[11px] bg-[#6e6e6e]'}`} />
            {i % 5 === 0 && i > 0 && <span className="absolute left-[-15px] w-[30px] text-center top-[10px] text-[11px] text-[#a9a9a9]">{i}</span>}
          </div>
        ))}
        <div className="absolute left-[4px] top-0 w-[7px] h-[24px] bg-[#86781e] border border-[#111] flex items-end justify-center text-[#c7c7c7] text-[11px] leading-[16px]">0</div>
      </div>
    </div>
  </>
);

const Status = () => (
  <div className="flex-1 flex text-[#dcdcdc]">
    <div className="w-[107px] shrink-0 pl-[4px] pt-[5px] flex flex-col gap-px">
      <div className="w-[98px] h-[22px] bg-[#dcc3c4] border border-[#8a8a8a]" />
      <div className="w-[98px] h-[22px] bg-white border border-[#8a8a8a] text-[#8d8d8d] font-['Liberation_Mono',monospace] text-[12px] leading-[20px] pl-[3px] overflow-hidden whitespace-nowrap">MAXScript Mi</div>
    </div>
    <div className="w-px bg-[#1c1c1c] mt-[2px]" />
    <div className="w-[917px] shrink-0 pl-[4px] pt-[9px] leading-[16px] text-[11px]">
      <div>1 Object Selected</div>
      <div className="mt-[9px]">Click or click-and-drag to select objects</div>
    </div>
    <div className="w-[438px] shrink-0 flex flex-col">
      <div className="h-[29px] flex items-center pt-[5px]">
        <Ic s="w-[15px] h-[15px]"><path d="M2 6V2h4M18 2h4v4M2 18v4h4M18 22h4v-4" stroke="#ccc" strokeWidth="1.500" /><rect x="6" y="6" width="12" height="12" fill={T} /></Ic>
        <Lock className="ml-[10px] w-[14px] h-[14px]" color={G} strokeWidth={2.6} />
        <Ic s="ml-[13px] w-[15px] h-[15px]"><rect x="2" y="2" width="20" height="20" stroke="#ccc" strokeWidth="2" /><path d="M12 5l7 7-7 7-7-7z" stroke="#ccc" strokeWidth="2.500" /></Ic>
        <span className="ml-[9px] w-[13px] font-bold text-[11px]">X:</span>
        <div className="w-[69px] h-[18px] bg-[#5c5c5c] flex items-center justify-between pl-[3px] pr-[3px] text-[11px]">-132,298<Spin /></div>
        <span className="ml-[2px] w-[12px] font-bold text-[11px]">Y:</span>
        <div className="w-[70px] h-[18px] bg-[#5c5c5c] flex items-center justify-between pl-[3px] pr-[3px] text-[11px]">-5,721<Spin /></div>
        <span className="ml-[2px] w-[12px] font-bold text-[11px]">Z:</span>
        <div className="w-[70px] h-[18px] bg-[#5c5c5c] flex items-center justify-between pl-[3px] pr-[3px] text-[11px]">-133,687<Spin /></div>
        <span className="ml-[3px] whitespace-nowrap text-[11px]">Grid = 0,0</span>
      </div>
      <div className="h-[22px] flex items-center pl-[305px] mt-px">
        <div className="w-[21px] h-[20px] bg-[#5a86bd] rounded-[3px] border-l border-[#111] flex items-center justify-center">
          <Ic s="w-[15px] h-[15px]"><path d="M12 2l9 5v10l-9 5-9-5V7zM3 7l9 5 9-5M12 12v10" stroke="#e0e0e0" strokeWidth="1.500" /></Ic>
        </div>
        <span className="ml-[5px] whitespace-nowrap text-[10.8px]">Add Time Tag</span>
      </div>
    </div>
    <div className="w-[134px] shrink-0 flex flex-col items-start pl-[7px]">
      <div className="h-[29px] flex items-center pt-[5px] text-[#ccc]">
        <Ic s="w-[16px] h-[16px]"><path d="M3 4v16M22 4l-9 8 9 8zM13 4l-9 8 9 8z" fill={G} stroke={G} strokeWidth=".6" /></Ic>
        <div className="ml-[3px] w-px h-[18px] bg-[#1c1c1c]" />
        <Ic s="ml-[3px] w-[16px] h-[16px]"><path d="M3 12l8-8v16zM14 4h3v16h-3zM19 4h2v16h-2z" fill={G} /></Ic>
        <Ic s="ml-[3px] w-[22px] h-[22px]"><path d="M5 2l16 10L5 22z" fill={G} /><path d="M24 20v4h-4z" fill="#ddd" /></Ic>
        <Ic s="ml-[2px] w-[16px] h-[16px]"><path d="M3 4h2v16H3zM7 4h3v16H7zM13 4l8 8-8 8z" fill={G} /></Ic>
        <div className="ml-[3px] w-px h-[18px] bg-[#1c1c1c]" />
        <Ic s="ml-[3px] w-[16px] h-[16px]"><path d="M2 4l9 8-9 8zM11 4l9 8-9 8zM21 4v16" fill={G} stroke={G} strokeWidth=".6" /></Ic>
      </div>
      <div className="h-[22px] flex items-center mt-px">
        <Ic s="w-[12px] h-[12px]"><path d="M10 4l-8 8 8 8zM14 4l8 8-8 8z" fill={G} /></Ic>
        <div className="ml-[3px] w-[71px] h-[19px] bg-[#5c5c5c] border-l border-[#111] flex items-center justify-between pl-[3px] pr-[3px] text-[11px]">0<Spin /></div>
        <Ic s="ml-[5px] w-[15px] h-[15px]"><circle cx="9" cy="9" r="8" fill="#ddd" /><path d="M9 4v5h4" stroke="#333" strokeWidth="1.500" /><circle cx="17" cy="17" r="5" fill={O} /><circle cx="17" cy="17" r="2" fill="#444" /></Ic>
      </div>
    </div>
    <div className="w-[41px] h-[43px] mt-[5px] bg-[#5e5e5e] rounded-[2px] flex items-center justify-center shrink-0">
      <Ic s="w-[34px] h-[34px]"><path d="M10 2h5v8h8v5h-8v1l-3 0v-1H2v-5h8z" fill="#ececec" stroke="#444" strokeWidth=".5" /><circle cx="16" cy="17" r="2.500" stroke={T} strokeWidth="1.600" /><path d="M14 19l-5 5M11 22l-1.500-1.500" stroke={T} strokeWidth="1.600" /></Ic>
    </div>
    <div className="ml-[6px] w-[46px] shrink-0 flex flex-col gap-[5px] pt-[6px] text-[10.5px]">
      <PBtn t="Auto Key" c="h-[19px] bg-[#5a5a5a]" />
      <PBtn t="Set Key" c="h-[19px] bg-[#5a5a5a]" />
    </div>
    <div className="ml-[5px] w-[115px] shrink-0 flex flex-col gap-[5px] pt-[6px] text-[11px]">
      <div className="h-[19px] bg-[#5c5c5c] flex items-center justify-between pl-[6px] pr-[7px]">Selected<span className="w-0 h-0 border-l-[3px] border-r-[3px] border-t-[5px] border-l-transparent border-r-transparent border-t-[#ddd]" /></div>
      <div className="h-[19px] flex items-center">
        <Ic s="w-[18px] h-[18px]"><path d="M6 3h12M7 3L4 20M17 3l3 17" stroke={G} strokeWidth="1.800" /><path d="M9 3v8M15 3v8" stroke={T} strokeWidth="1.800" /></Ic>
        <PBtn t="Key Filters..." c="ml-[8px] w-[89px] h-[19px]" />
      </div>
    </div>
    <div className="ml-[18px] grid grid-cols-4 gap-x-[6px] gap-y-[5px] pt-[8px] content-start shrink-0">
      <Search className="w-[18px] h-[18px] -scale-x-100" color={G} strokeWidth={2} />
      <Ic s="w-[18px] h-[18px]"><circle cx="9" cy="14" r="5" stroke={G} strokeWidth="2" /><path d="M6 18l-4 4" stroke={G} strokeWidth="2" /><rect x="13" y="1" width="5" height="5" fill={T} /><rect x="19" y="1" width="5" height="5" fill={G} /><rect x="19" y="7" width="5" height="5" fill={T} /></Ic>
      <Ic s="w-[18px] h-[18px]"><path d="M2 6V2h4M18 2h4v4M2 18v4h4M18 22h4v-4" stroke="#ccc" strokeWidth="1.500" /><path d="M12 4l7 4v8l-7 4-7-4V8z" fill={T} /></Ic>
      <Ic s="w-[18px] h-[18px]"><path d="M15 2l6 4v8l-6 4-6-4V6z" fill={T} /><path d="M3 10h4M5 8v4M3 18h4M5 16v4" stroke={G} strokeWidth="2" /></Ic>
      <Ic s="w-[18px] h-[18px]"><rect x="2" y="2" width="20" height="20" stroke={G} strokeWidth="1.800" strokeDasharray="3 2" /><circle cx="12" cy="11" r="5" stroke={T} strokeWidth="2" /><path d="M8 15l-4 5" stroke={T} strokeWidth="2" /></Ic>
      <Hand className="w-[18px] h-[18px]" color="#e0e0e0" fill="#e0e0e0" strokeWidth={1.500} />
      <Ic s="w-[18px] h-[18px]"><path d="M8 20C3 14 10 4 20 3" stroke={G} strokeWidth="3" /><path d="M10 14l8-8v6l-6 6z" fill={T} /></Ic>
      <Ic s="w-[18px] h-[18px]"><rect x="3" y="2" width="18" height="20" stroke={G} strokeWidth="2" /><path d="M3 22V12l9-10h9v8L12 22z" fill={G} /></Ic>
    </div>
  </div>
);

export default function App() {
  return (
    <div className="w-[1920px] h-[1024px] overflow-hidden bg-[#444] flex flex-col font-['Open_Sans',sans-serif] text-[11.5px]">
      <Menu />
      <Toolbar />
      <Tabs />
      <Ribbon />
      <div className="h-[822px] shrink-0 flex">
        <LeftDock />
        <Explorer />
        <Viewport />
        <RightPanel />
      </div>
      <Timeline />
      <Status />
    </div>
  );
}
